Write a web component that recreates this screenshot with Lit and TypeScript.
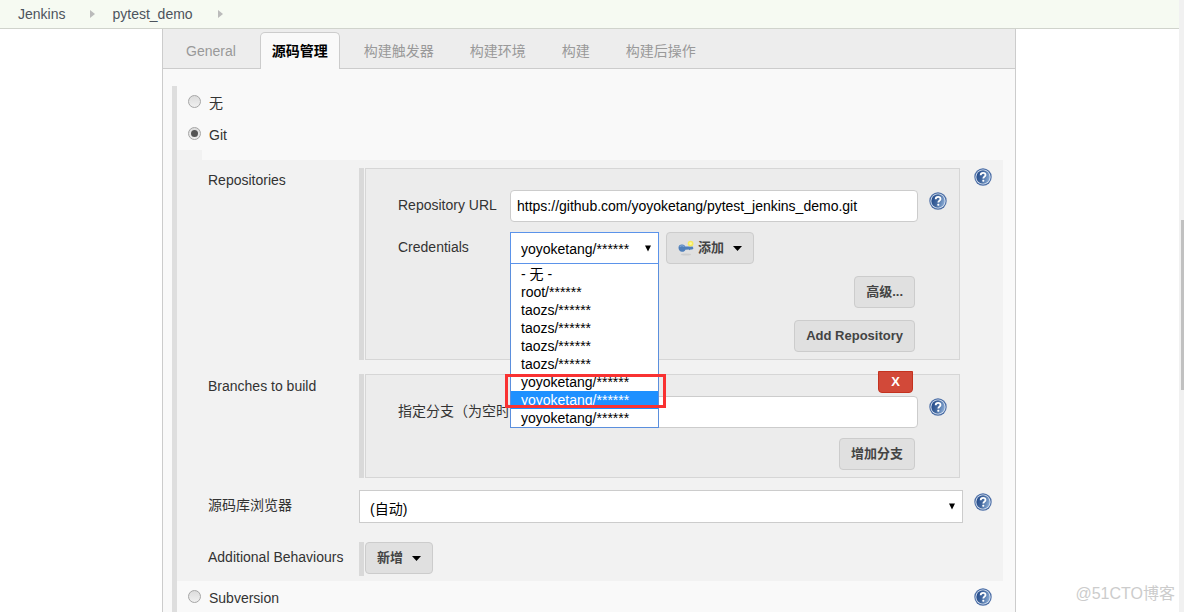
import { LitElement, html, css } from "lit";
import { customElement, property, state } from "lit/decorators.js";
import { classMap } from "lit/directives/class-map.js";

@customElement("help-button")
class HelpButton extends LitElement {
  @property() topic = "";

  static styles = css`
    :host { display: block; width: 18px; height: 18px; }
    .help {
      display: block;
      width: 18px;
      height: 18px;
      padding: 0;
      border: 0;
      background: none;
      cursor: pointer;
    }
    .icon { display: block; }
  `;

  render() {
    return html`
      <button class="help" type="button" aria-label=${"Help: " + this.topic}>
        <svg class="icon" width="18" height="18" viewBox="0 0 18 18" aria-hidden="true">
          <defs>
            <linearGradient id="disc" x1="0" y1="0.2" x2="1" y2="0.5">
              <stop offset="0" stop-color="#1f4789" />
              <stop offset="0.5" stop-color="#44699f" />
              <stop offset="1" stop-color="#86a8d3" />
            </linearGradient>
          </defs>
          <circle cx="9" cy="9" r="8.7" fill="#4a6da6" />
          <circle cx="9" cy="9" r="7.6" fill="#dbe4f0" />
          <circle cx="9" cy="9" r="6.7" fill="url(#disc)" />
          <path d="M6.7 7.2C6.700 5.500 7.700 4.800 9.100 4.800s2.400.8 2.400 2.100c0 1.700-2.200 1.800-2.200 3.700"
            fill="none" stroke="#fff" stroke-width="1.800" />
          <rect x="8.300" y="11.700" width="2" height="2" rx=".6" fill="#fff" />
        </svg>
      </button>
    `;
  }
}

@customElement("app-root")
class AppRoot extends LitElement {
  @state() private scm = "git";
  @state() private tab = 1;
  @state() private active = 7;

  private tabs = ["General", "源码管理", "构建触发器", "构建环境", "构建", "构建后操作"];

  private credentials = [
    "- 无 -",
    "root/******",
    "taozs/******",
    "taozs/******",
    "taozs/******",
    "taozs/******",
    "yoyoketang/******",
    "yoyoketang/******",
    "yoyoketang/******",
  ];

  static styles = css`
    :host {
      display: flex;
      position: relative;
      height: 100vh;
      overflow: hidden;
      background: #fff;
      color: #333;
      font: 14px/20px "Liberation Sans", "Noto Sans CJK SC", sans-serif;
    }
    *, *::before { box-sizing: border-box; }
    button, input, select { font-family: inherit; margin: 0; }

    .page { flex: 1; min-width: 0; display: flex; flex-direction: column; }

    .crumbs {
      display: flex;
      align-items: center;
      flex: none;
      height: 29px;
      padding-left: 18px;
      border-bottom: 1px solid #d0d3cc;
      background: #f6faf2;
    }
    .crumb { color: #4d545d; text-decoration: none; }
    .chevron { margin: 0 17px 0 25px; }

    .panel {
      flex: 1;
      display: flex;
      flex-direction: column;
      margin: 0 163px 0 162px;
      border: solid #ccc;
      border-width: 0 1px;
      background: #f9f9f9;
    }
    .tabs {
      display: flex;
      flex: none;
      gap: 12px;
      height: 40px;
      padding: 3px 11px 0;
      border-bottom: 1px solid #ccc;
      background: #ededed;
    }
    .tab {
      height: 37px;
      padding: 0 12px;
      border: 0;
      background: none;
      color: #999;
      font-size: 14px;
      line-height: 20px;
      white-space: nowrap;
    }
    .tab.on {
      padding: 0 11px;
      border: 1px solid #ccc;
      border-bottom: 0;
      border-radius: 5px 5px 0 0;
      background: #f9f9f9;
      color: #000;
      font-weight: 700;
    }

    .scm {
      flex: 1;
      margin: 17px 12px 0 9px;
      border-left: 5px solid #dedede;
    }
    .choice { display: flex; align-items: flex-start; height: 32px; padding: 7px 11px 0; }
    .choice-label { display: flex; align-items: flex-start; flex: 1; gap: 8px; }
    .radio {
      appearance: none;
      flex: none;
      display: grid;
      place-items: center;
      width: 13px;
      height: 13px;
      margin-top: 2px;
      border: 1px solid #a6a6a6;
      border-radius: 50%;
      background: linear-gradient(#dcdcdc, #f0f0f0);
    }
    .radio:checked::before {
      content: "";
      width: 7px;
      height: 7px;
      border-radius: 50%;
      background: #555;
    }

    .indent { width: 25px; height: 10px; background: #f2f2f2; }
    .options {
      display: flex;
      flex-direction: column;
      padding: 8px 11px 5px 31px;
      background: #f2f2f2;
    }
    .option {
      display: grid;
      grid-template-columns: 151px minmax(0, 1fr) 18px;
      align-items: start;
    }
    .option + .option { margin-top: 14px; }
    .option.browser { margin-top: 12px; }
    .option.extra { margin-top: 19px; }
    .name { padding-top: 2px; }
    .browser .name, .extra .name { padding-top: 5px; }
    .browser > help-button { margin-top: 3px; }
    .field { margin-right: 11px; }
    .group {
      display: flex;
      align-items: flex-start;
      min-height: 34px;
      margin-right: 14px;
      padding-left: 1px;
      border-left: 5px solid #d9d9d9;
    }
    .box {
      position: relative;
      flex: 1;
      padding: 21px 12px 7px 32px;
      border: 1px solid #d6d6d6;
      background: #ececec;
    }
    .line {
      display: grid;
      grid-template-columns: 112px minmax(0, 1fr) 18px;
      align-items: start;
      height: 32px;
      margin-bottom: 10px;
    }
    .line > help-button { margin-top: 2px; }
    .line-name { padding-top: 5px; white-space: nowrap; }
    .text {
      width: calc(100% - 11px);
      height: 32px;
      padding: 0 6px;
      border: 1px solid #ccc;
      border-radius: 4px;
      background: #fff;
      color: #000;
      font-size: 14px;
    }
    .creds { display: flex; gap: 7px; }
    .actions {
      display: flex;
      flex-direction: column;
      align-items: flex-end;
      gap: 12px;
      padding-right: 32px;
    }
    .actions.spaced { padding-top: 2px; }

    .button {
      display: inline-flex;
      align-items: center;
      height: 32px;
      padding: 0 11px;
      border: 1px solid #ccc;
      border-radius: 4px;
      background: #e0e0e0;
      color: #444;
      font-size: 13px;
      font-weight: 700;
      line-height: 20px;
      white-space: nowrap;
    }
    .button.menu { gap: 9px; }
    .key-label { display: flex; align-items: center; gap: 4px; }

    .picker { position: relative; display: grid; align-items: center; }
    .picker > * { grid-area: 1 / 1; }
    .select {
      appearance: none;
      width: 100%;
      height: 33px;
      padding: 4px 10px 0;
      border: 1px solid #ccc;
      border-radius: 0;
      background: #fff;
      color: #000;
      font-size: 14px;
      outline: 0;
    }
    .picker.cred { width: 149px; }
    .cred .select { height: 32px; padding-top: 2px; border: 1px solid #5b93ea; }
    .arrow { justify-self: end; margin-right: 8px; pointer-events: none; }

    .list {
      position: absolute;
      z-index: 2;
      top: 32px;
      left: 0;
      right: 0;
      margin: 0;
      padding: 1px 0 0;
      border: 1px solid #5b8fdd;
      border-top: 0;
      background: #fff;
      color: #000;
      list-style: none;
    }
    .item { height: 18px; padding-left: 10px; line-height: 18px; white-space: nowrap; }
    .item.on { background: #1e90ff; color: #fff; }
    .mark {
      position: absolute;
      z-index: 3;
      top: 142px;
      left: -5px;
      right: -7px;
      height: 34px;
      border: 3px solid #f93232;
      pointer-events: none;
    }

    .remove {
      position: absolute;
      top: -4px;
      right: 46px;
      width: 35px;
      height: 22px;
      padding: 0;
      border: 1px solid #c4321f;
      border-radius: 0 0 4px 4px;
      background: #d24939;
      color: #fff;
      font-size: 13px;
      font-weight: 700;
      line-height: 20px;
    }

    .scroll { flex: none; width: 5px; padding: 220px 0 0 2px; background: #f1f1f1; }
    .thumb { height: 170px; background: #c1c1c1; }
    .watermark {
      position: absolute;
      right: 9px;
      bottom: 8px;
      color: #ccc;
      font-size: 16px;
      line-height: 20px;
    }
  `;

  private chevron() {
    return html`<svg class="chevron" width="5" height="8" viewBox="0 0 5 8" aria-hidden="true">
      <path d="M0 0l5 4-5 4z" fill="#bbb" />
    </svg>`;
  }

  private caret() {
    return html`<svg width="9" height="5" viewBox="0 0 9 5" aria-hidden="true">
      <path d="M0 0h9L4.5 5z" fill="#000" />
    </svg>`;
  }

  private arrow() {
    return html`<svg class="arrow" width="6" height="7" viewBox="0 0 6 7" aria-hidden="true">
      <path d="M0 0.500h6L3 6.500z" fill="#000" />
    </svg>`;
  }

  private key() {
    return html`<svg width="16" height="16" viewBox="0 0 16 16" aria-hidden="true">
      <ellipse cx="8" cy="14.500" rx="5" ry="1" fill="#cdcdcd" />
      <path d="M0.500 7.800C0.500 5.400 2.200 4.300 4.200 4.500c1.600.1 2.500.9 3.100 2l7.200.1 1 1.600-1.200 1.400-1.800-.1-.8.800-1-.8-3.300.2C6.800 11.200 5.600 12 4 11.800 1.900 11.600.5 10.200.5 7.800z" fill="#4f7fba" />
      <path d="M1.800 6.800C2.600 5.500 5 5.400 6.300 6.700" fill="none" stroke="#84a9d6" stroke-width="1.200" />
      <circle cx="12.600" cy="3.600" r="2.900" fill="#f7ea5c" />
      <circle cx="12.600" cy="3.600" r="1.300" fill="#fdf9a0" />
    </svg>`;
  }

  private choice(id: string, name: string, help = false) {
    return html`
      <div class="choice">
        <label class="choice-label">
          <input class="radio" type="radio" name="scm" .checked=${this.scm === id}
            @change=${() => (this.scm = id)} />
          <span>${name}</span>
        </label>
        ${help ? html`<help-button topic=${name}></help-button>` : ""}
      </div>
    `;
  }

  render() {
    return html`
      <div class="page">
        <nav class="crumbs">
          <a class="crumb" href="#jenkins">Jenkins</a>
          ${this.chevron()}
          <a class="crumb" href="#pytest_demo">pytest_demo</a>
          ${this.chevron()}
        </nav>
        <main class="panel">
          <div class="tabs" role="tablist">
            ${this.tabs.map(
              (name, i) => html`<button type="button" role="tab"
                class=${classMap({ tab: true, on: i === this.tab })}
                aria-selected=${i === this.tab}
                @click=${() => (this.tab = i)}>${name}</button>`
            )}
          </div>
          <div class="scm">
            ${this.choice("none", "无")}
            ${this.choice("git", "Git")}
            <div class="indent"></div>
            <section class="options">
              <div class="option">
                <div class="name">Repositories</div>
                <div class="group">
                  <div class="box">
                    <div class="line">
                      <label class="line-name" for="url">Repository URL</label>
                      <input class="text" id="url" type="text"
                        value="https://github.com/yoyoketang/pytest_jenkins_demo.git" />
                      <help-button topic="Repository URL"></help-button>
                    </div>
                    <div class="line">
                      <label class="line-name" for="cred">Credentials</label>
                      <div class="creds">
                        <div class="picker cred">
                          <select class="select" id="cred">
                            <option>yoyoketang/******</option>
                          </select>
                          ${this.arrow()}
                          <ul class="list" role="listbox" aria-label="Credentials">
                            ${this.credentials.map(
                              (name, i) => html`<li role="option"
                                class=${classMap({ item: true, on: i === this.active })}
                                aria-selected=${i === this.active}
                                @mouseenter=${() => (this.active = i)}>${name}</li>`
                            )}
                          </ul>
                          <div class="mark"></div>
                        </div>
                        <button class="button menu" type="button">
                          <span class="key-label">${this.key()}添加</span>
                          ${this.caret()}
                        </button>
                      </div>
                    </div>
                    <div class="actions spaced">
                      <button class="button" type="button">高级...</button>
                      <button class="button" type="button">Add Repository</button>
                    </div>
                  </div>
                </div>
                <help-button topic="Repositories"></help-button>
              </div>

              <div class="option">
                <div class="name">Branches to build</div>
                <div class="group">
                  <div class="box">
                    <button class="remove" type="button">X</button>
                    <div class="line">
                      <label class="line-name" for="branch">指定分支（为空时</label>
                      <input class="text" id="branch" type="text" />
                      <help-button topic="Branches"></help-button>
                    </div>
                    <div class="actions">
                      <button class="button" type="button">增加分支</button>
                    </div>
                  </div>
                </div>
              </div>

              <div class="option browser">
                <label class="name" for="browser">源码库浏览器</label>
                <div class="picker field">
                  <select class="select" id="browser">
                    <option>(自动)</option>
                  </select>
                  ${this.arrow()}
                </div>
                <help-button topic="源码库浏览器"></help-button>
              </div>

              <div class="option extra">
                <div class="name">Additional Behaviours</div>
                <div class="group">
                  <button class="button menu" type="button">新增 ${this.caret()}</button>
                </div>
              </div>
            </section>
            ${this.choice("svn", "Subversion", true)}
          </div>
        </main>
      </div>
      <div class="scroll"><div class="thumb"></div></div>
      <div class="watermark">@51CTO博客</div>
    `;
  }
}
